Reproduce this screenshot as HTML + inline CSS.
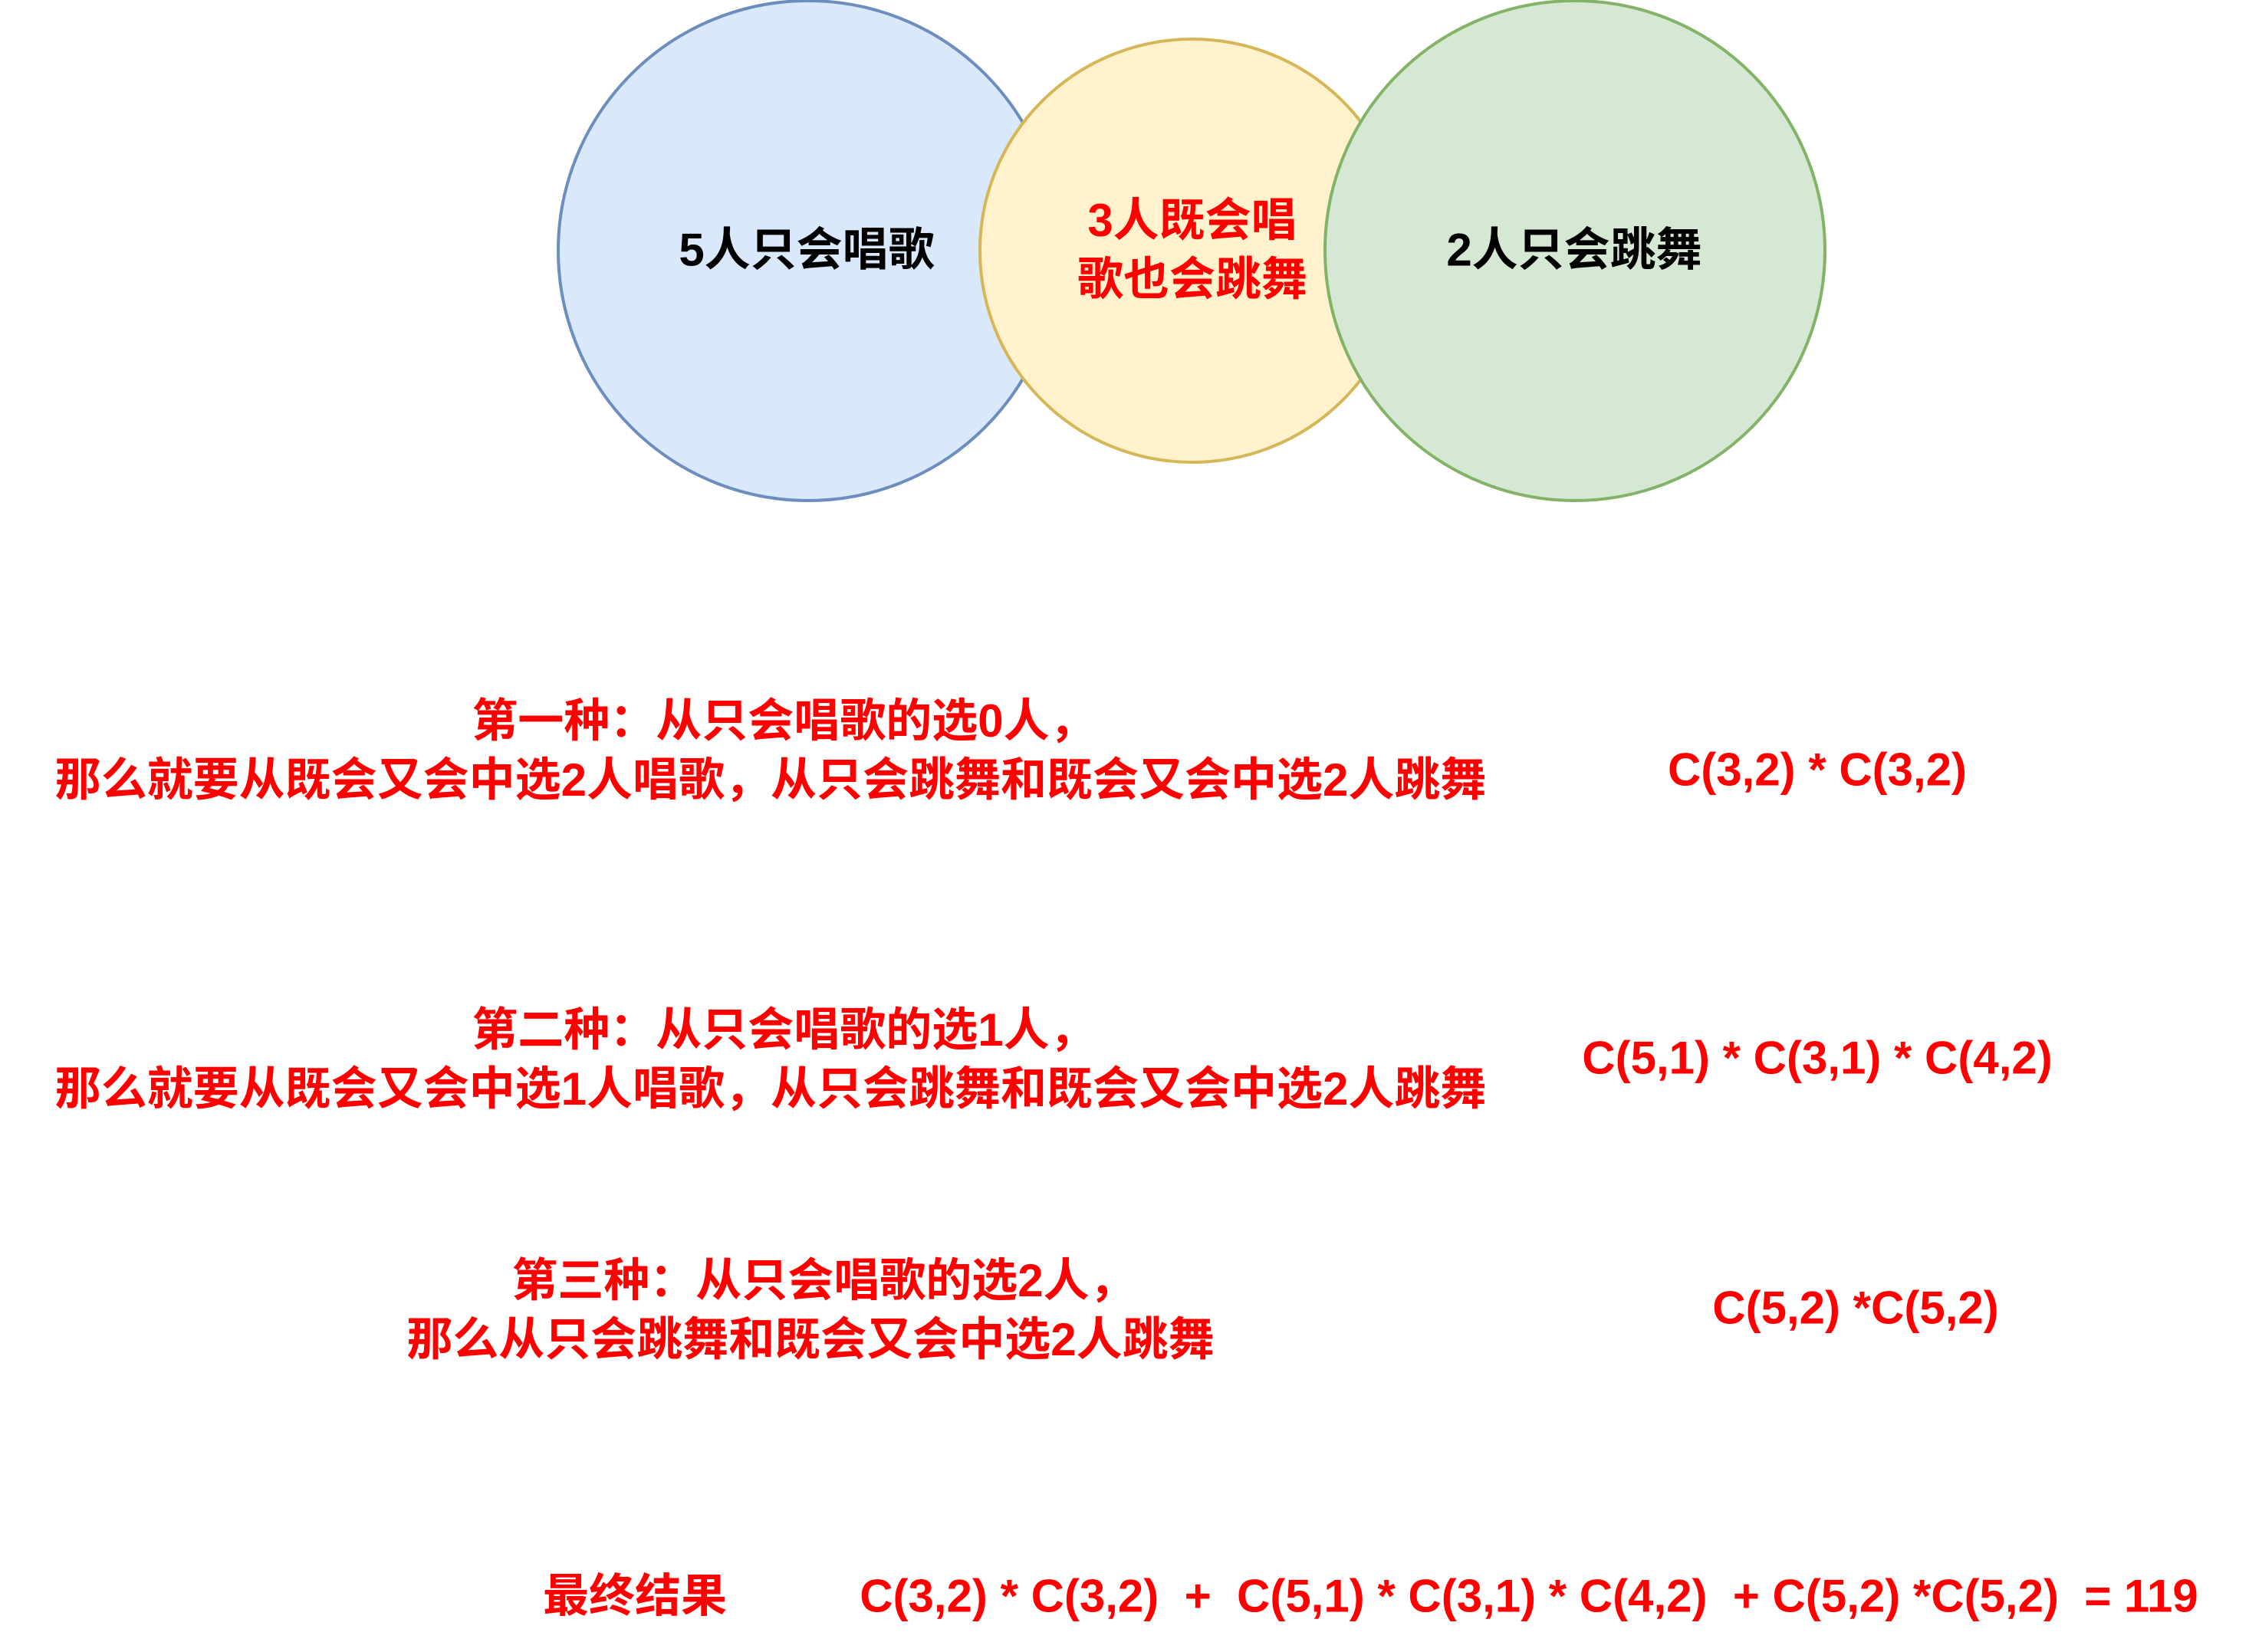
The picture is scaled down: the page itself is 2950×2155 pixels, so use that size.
<!DOCTYPE html>
<html><head><meta charset="utf-8"><style>
html,body{margin:0;padding:0;background:#fff;}
body{width:2950px;height:2155px;position:relative;overflow:hidden;font-family:"Liberation Sans","Noto Sans CJK SC",sans-serif;font-weight:bold;}
.t{position:absolute;white-space:nowrap;text-align:center;transform:translate(-50%,-50%);font-size:60px;line-height:77px;}
.r{color:#ff0000;}
.k{color:#000;}
.s{position:relative;left:17px;}
</style></head><body>
<svg width="2950" height="2155" style="position:absolute;left:0;top:0">
<circle cx="1054" cy="327" r="326" fill="#dae8fc" stroke="#6c8ebf" stroke-width="4"/>
<ellipse cx="1555" cy="327" rx="277" ry="276" fill="#fff2cc" stroke="#d6b656" stroke-width="4"/>
<circle cx="2054" cy="327" r="326" fill="#d5e8d4" stroke="#82b366" stroke-width="4"/>
</svg>
<div class="t k" style="left:1052px;top:326px">5人只会唱歌</div>
<div class="t r" style="left:1555px;top:326px">3人既会唱<br>歌也会跳舞</div>
<div class="t k" style="left:2053px;top:326px">2人只会跳舞</div>

<div class="t r" style="left:1005px;top:979px"><span class="s">第一种：从只会唱歌的选0人，</span><br>那么就要从既会又会中选2人唱歌，从只会跳舞和既会又会中选2人跳舞</div>
<div class="t r" style="left:2370px;top:1004px">C(3,2) * C(3,2)</div>

<div class="t r" style="left:1005px;top:1382px"><span class="s">第二种：从只会唱歌的选1人，</span><br>那么就要从既会又会中选1人唱歌，从只会跳舞和既会又会中选2人跳舞</div>
<div class="t r" style="left:2370px;top:1380px">C(5,1) * C(3,1) * C(4,2)</div>

<div class="t r" style="left:1057px;top:1709px"><span class="s">第三种：从只会唱歌的选2人，</span><br>那么从只会跳舞和既会又会中选2人跳舞</div>
<div class="t r" style="left:2420px;top:1706px">C(5,2) *C(5,2)</div>

<div class="t r" style="left:828px;top:2082px">最终结果</div>
<div class="t r" style="left:1994px;top:2082px;white-space:pre">C(3,2) * C(3,2)  +  C(5,1) * C(3,1) * C(4,2)  + C(5,2) *C(5,2)  = 119</div>
</body></html>
